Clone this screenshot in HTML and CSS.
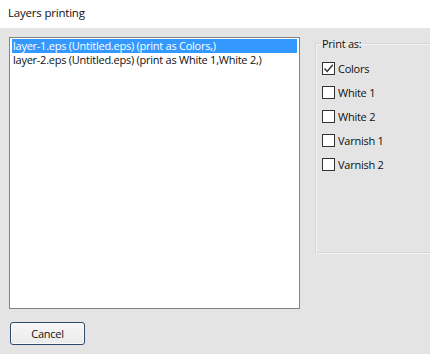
FILE: index.html
```html
<!DOCTYPE html>
<html lang="en">
  <head>
    <meta charset="UTF-8" />
    <meta name="viewport" content="width=device-width, initial-scale=1.0" />
    <title>Layers printing</title>
    <link rel="stylesheet" href="styles.css">
  </head>
  <body>
    <div class="titlebar">Layers printing</div>
    <div class="dialog">
      <div class="main">
        <div class="layer-list">
          <div class="layer-item selected">layer-1.eps (Untitled.eps) (print as Colors,)</div>
          <div class="layer-item">layer-2.eps (Untitled.eps) (print as White 1,White 2,)</div>
        </div>
        <fieldset class="print-as">
          <legend>Print as:</legend>
          <label class="check-row"><span class="box checked"><svg width="11" height="11" viewBox="0 0 11 11"><path d="M1.5 5.5 L4.2 8.5 L9.8 1.8" fill="none" stroke="#333" stroke-width="1.4"/></svg></span>Colors</label>
          <label class="check-row"><span class="box"></span>White 1</label>
          <label class="check-row"><span class="box"></span>White 2</label>
          <label class="check-row"><span class="box"></span>Varnish 1</label>
          <label class="check-row"><span class="box"></span>Varnish 2</label>
        </fieldset>
      </div>
      <button class="cancel">Cancel</button>
    </div>
  </body>
</html>
```

FILE: styles.css
```css
* {
  box-sizing: border-box;
}
body {
  margin: 0;
  width: 430px;
  height: 354px;
  overflow: hidden;
  background: #e4e4e4;
  font-family: "Open Sans", "Noto Sans", sans-serif;
  font-size: 11px;
  letter-spacing: -0.25px;
  color: #111;
}
.titlebar {
  height: 28px;
  line-height: 25px;
  padding-left: 8px;
  background: #fff;
  font-size: 11.5px;
  letter-spacing: -0.2px;
}
.dialog {
  padding: 9px 0 0 9px;
}
.main {
  display: flex;
  align-items: flex-start;
}
.layer-list {
  flex: none;
  width: 291px;
  height: 272px;
  background: #fff;
  border: 1px solid #828282;
  padding: 1px 2px;
}
.layer-item {
  height: 14px;
  line-height: 14px;
  padding-left: 1px;
  white-space: nowrap;
}
.layer-item.selected {
  background: #3399ff;
  color: #fff;
}
.print-as {
  flex: none;
  min-width: 0;
  margin: -1px 0 0 15px;
  padding: 5px 0 0 6px;
  width: 125px;
  height: 217px;
  border: 1px solid #d6d6d6;
  border-right: none;
  box-shadow: inset 1px 1px 0 #f4f4f4, 1px 1px 0 #f4f4f4;
}
.print-as legend {
  padding: 0 1px;
  margin-left: -1px;
}
.check-row {
  display: flex;
  align-items: center;
  height: 24px;
}
.box {
  flex: none;
  width: 13px;
  height: 13px;
  border: 1px solid #333;
  background: #fff;
  margin-right: 3px;
  display: flex;
  align-items: center;
  justify-content: center;
}
.cancel {
  display: block;
  margin-top: 13px;
  margin-left: 1px;
  width: 75px;
  height: 23px;
  border: 1px solid #2c4a6a;
  border-radius: 3px;
  background: linear-gradient(#f6f6f6, #ebebeb);
  box-shadow: inset 0 0 0 1px #fafafa;
  font-family: "Open Sans", "Noto Sans", sans-serif;
  font-size: 11px;
  letter-spacing: -0.25px;
  color: #111;
  padding: 0;
}
```
